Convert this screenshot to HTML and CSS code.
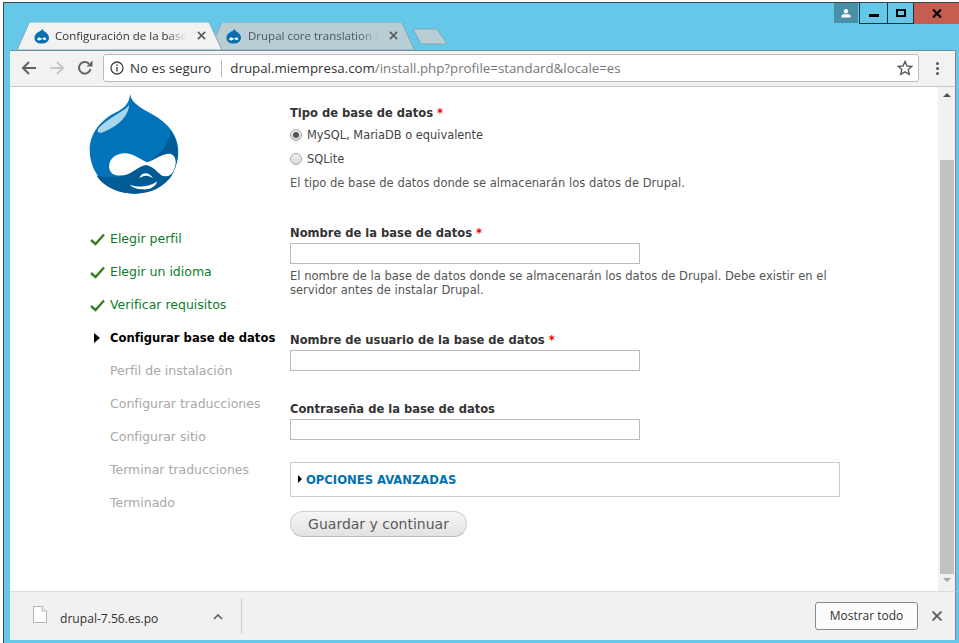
FILE: index.html
```html
<!DOCTYPE html>
<html lang="es">
<head>
    <meta charset="UTF-8">
    <title>Configuración de la base de datos</title>
    <link rel="stylesheet" href="styles.css">
</head>
<body>
    <div class="window">

        <div class="titlebar">
            <div class="tabs">
                <div class="tab tab-active">
                    <svg class="tab-shape" viewBox="0 0 205 28"><path d="M0 28 L12 1 Q12.5 0 14 0 L191 0 Q192 0 192.500 1 L205 28 Z" fill="#f2f2f2" stroke="#7fa9b8"/></svg>
                    <svg class="favicon" viewBox="0 0 16 16"><path d="M9 0 C9 2 11 3 12.500 4 C14.500 5.500 16 7.500 16 10 C16 13.500 12.500 16 8 16 C3.500 16 0.500 13.500 0.500 10 C0.500 7 2.500 5 5 3.500 C7 2.500 8.500 2 9 0 Z" fill="#0b6eb0"/><path d="M3.500 11.500 C3.500 9.500 5.500 9 7 10 L8.500 10.800 C10 9.800 12.500 8.800 13 10.500 C13.200 12 11.500 13 10.500 12 C9.500 11 8.500 11 7.500 12 C6 13 3.500 13 3.500 11.500 Z" fill="#fff"/></svg>
                    <span class="tab-title">Configuración de la base</span>
                    <svg class="tab-close" viewBox="0 0 10 10"><path d="M1 1 L9 9 M9 1 L1 9" stroke="#5a5a5a" stroke-width="1.800"/></svg>
                </div>
                <div class="tab tab-back">
                    <svg class="tab-shape" viewBox="0 0 205 28"><path d="M0 28 L12 1 Q12.500 0 14 0 L191 0 Q192 0 192.500 1 L205 28 Z" fill="#b9cdd4" stroke="#7fa9b8"/></svg>
                    <svg class="favicon" viewBox="0 0 16 16"><path d="M9 0 C9 2 11 3 12.500 4 C14.500 5.500 16 7.500 16 10 C16 13.500 12.500 16 8 16 C3.500 16 0.500 13.500 0.500 10 C0.500 7 2.500 5 5 3.500 C7 2.500 8.500 2 9 0 Z" fill="#0b6eb0"/><path d="M3.500 11.500 C3.500 9.500 5.500 9 7 10 L8.500 10.800 C10 9.800 12.500 8.800 13 10.500 C13.200 12 11.500 13 10.500 12 C9.500 11 8.500 11 7.500 12 C6 13 3.500 13 3.500 11.500 Z" fill="#fff"/></svg>
                    <span class="tab-title">Drupal core translation d</span>
                    <svg class="tab-close" viewBox="0 0 10 10"><path d="M1 1 L9 9 M9 1 L1 9" stroke="#5a5a5a" stroke-width="1.800"/></svg>
                </div>
                <svg class="new-tab" viewBox="0 0 35 17"><path d="M1 1 L23 1 Q24 1 24.500 2 L33.500 15 Q34 16 33 16 L9 16 Q8 16 7.500 15 L0.500 2 Q0 1 1 1 Z" fill="#b9cdd4" stroke="#7fa9b8"/></svg>
            </div>
            <div class="win-controls">
                <div class="win-user">
                    <svg viewBox="0 0 10 9" width="10" height="9"><circle cx="5" cy="2.200" r="2.200" fill="#fff"/><path d="M0.500 8.500 L0.500 6.800 Q0.500 5.500 3 5.300 L7 5.300 Q9.500 5.500 9.500 6.800 L9.500 8.500 Z" fill="#fff"/></svg>
                </div>
                <div class="win-btn win-min"><span></span></div>
                <div class="win-btn win-max"><span></span></div>
                <div class="win-btn win-close">
                    <svg viewBox="0 0 10 9" width="10" height="9"><path d="M1 0.500 L9 8.500 M9 0.500 L1 8.500" stroke="#000" stroke-width="2.200"/></svg>
                </div>
            </div>
        </div>

        <div class="toolbar">
            <svg class="tool-icon" viewBox="0 0 16 16"><path d="M15 8 L2.500 8 M8 2 L2 8 L8 14" fill="none" stroke="#5f6368" stroke-width="2"/></svg>
            <svg class="tool-icon" viewBox="0 0 16 16"><path d="M1 8 L13.500 8 M8 2 L14 8 L8 14" fill="none" stroke="#c8c8c8" stroke-width="2"/></svg>
            <svg class="tool-icon" viewBox="0 0 16 16"><path d="M13.500 9 A5.800 5.800 0 1 1 12 3.800" fill="none" stroke="#5f6368" stroke-width="2"/><path d="M9.500 6.500 L15.500 6.500 L15.500 0.500 Z" fill="#5f6368"/></svg>
            <div class="omnibox">
                <svg class="info-icon" viewBox="0 0 14 14"><circle cx="7" cy="7" r="6" fill="none" stroke="#444" stroke-width="1.300"/><rect x="6.300" y="6" width="1.400" height="4.500" fill="#444"/><rect x="6.300" y="3.500" width="1.400" height="1.500" fill="#444"/></svg>
                <span class="secure-text">No es seguro</span>
                <span class="omni-sep"></span>
                <span class="url"><span class="url-host">drupal.miempresa.com</span>/install.php?profile=standard&amp;locale=es</span>
                <svg class="star" viewBox="0 0 16 16"><path d="M8 1.500 L10 6 L14.800 6.400 L11.200 9.600 L12.300 14.400 L8 11.900 L3.700 14.400 L4.800 9.600 L1.200 6.400 L6 6 Z" fill="none" stroke="#5a5a5a" stroke-width="1.400"/></svg>
            </div>
            <div class="menu-dots"><span></span><span></span><span></span></div>
        </div>

        <div class="main">
            <div class="page">
                <div class="sidebar">
                    <svg class="logo" viewBox="55 15 275 305">
                        <path d="M181 18 C184 40 200 52 235 72 C285 98 325 135 325 190 C325 262 265 316 192 316 C120 316 60 262 60 185 C60 135 95 95 135 75 C160 62 178 50 181 18 Z" fill="#0073ba"/>
                        <path d="M303 128 C330 170 330 230 300 270 C265 310 225 316 192 316 C150 316 105 300 80 262 C110 270 150 268 175 258 C195 245 210 232 230 222 C265 205 295 175 303 128 Z" fill="#005a94"/>
                        <path d="M178 50 C165 70 115 88 85 122 C80 135 90 137 105 130 C140 115 175 90 178 50 Z" fill="#a9d5ef"/>
                        <path d="M118 235 C118 210 140 195 165 195 C190 195 215 215 232 222 C255 215 280 195 300 197 C318 200 322 225 312 245 C305 262 290 268 275 262 C262 250 245 232 228 230 C205 232 185 262 150 262 C130 262 118 252 118 235 Z" fill="#fff"/>
                        <path d="M208 270 C215 252 235 248 250 270 C235 260 222 260 208 270 Z" fill="#fff"/>
                        <path d="M180 289 C205 298 235 298 262 280 C255 300 235 305 215 303 C200 302 188 298 180 289 Z" fill="#fff"/>
                    </svg>
                    <ol class="steps">
                        <li class="step done"><svg class="step-icon" viewBox="0 0 15 13"><path d="M1 7 L5.500 11 L14 1.500" fill="none" stroke="#3b7d23" stroke-width="2.400"/></svg>Elegir perfil</li>
                        <li class="step done"><svg class="step-icon" viewBox="0 0 15 13"><path d="M1 7 L5.500 11 L14 1.500" fill="none" stroke="#3b7d23" stroke-width="2.400"/></svg>Elegir un idioma</li>
                        <li class="step done"><svg class="step-icon" viewBox="0 0 15 13"><path d="M1 7 L5.500 11 L14 1.500" fill="none" stroke="#3b7d23" stroke-width="2.400"/></svg>Verificar requisitos</li>
                        <li class="step active"><span class="step-arrow"></span>Configurar base de datos</li>
                        <li class="step">Perfil de instalación</li>
                        <li class="step">Configurar traducciones</li>
                        <li class="step">Configurar sitio</li>
                        <li class="step">Terminar traducciones</li>
                        <li class="step">Terminado</li>
                    </ol>
                </div>

                <div class="form">
                    <div class="form-item has-desc">
                        <div class="label">Tipo de base de datos <span class="req">*</span></div>
                        <div class="radio-row"><span class="radio checked"></span>MySQL, MariaDB o equivalente</div>
                        <div class="radio-row"><span class="radio"></span>SQLite</div>
                        <div class="desc radio-desc">El tipo de base de datos donde se almacenarán los datos de Drupal.</div>
                    </div>
                    <div class="form-item has-desc name-item">
                        <div class="label">Nombre de la base de datos <span class="req">*</span></div>
                        <div class="text-input"></div>
                        <div class="desc">El nombre de la base de datos donde se almacenarán los datos de Drupal. Debe existir en el servidor antes de instalar Drupal.</div>
                    </div>
                    <div class="form-item">
                        <div class="label">Nombre de usuario de la base de datos <span class="req">*</span></div>
                        <div class="text-input"></div>
                    </div>
                    <div class="form-item last">
                        <div class="label">Contraseña de la base de datos</div>
                        <div class="text-input"></div>
                    </div>
                    <div class="fieldset"><span class="fieldset-arrow"></span><span class="fieldset-link">OPCIONES AVANZADAS</span></div>
                    <div class="submit">Guardar y continuar</div>
                </div>
            </div>

            <div class="scrollbar">
                <div class="scroll-up"></div>
                <div class="scroll-thumb"></div>
                <div class="scroll-down"></div>
            </div>
        </div>

        <div class="shelf">
            <svg class="file-icon" viewBox="0 0 14 17"><path d="M0.500 0.500 L9 0.500 L13.500 5 L13.500 16.500 L0.500 16.500 Z" fill="#fff" stroke="#b5b5b5"/><path d="M9 0.500 L9 5 L13.500 5" fill="#eee" stroke="#b5b5b5"/></svg>
            <span class="file-name">drupal-7.56.es.po</span>
            <svg class="chevron" viewBox="0 0 10 6"><path d="M1 5 L5 1 L9 5" fill="none" stroke="#5a5a5a" stroke-width="1.600"/></svg>
            <span class="shelf-sep"></span>
            <div class="show-all">Mostrar todo</div>
            <svg class="shelf-close" viewBox="0 0 10 10"><path d="M0.500 0.500 L9.500 9.500 M9.500 0.500 L0.500 9.500" stroke="#5a5a5a" stroke-width="1.800"/></svg>
        </div>

    </div>
</body>
</html>
```

FILE: styles.css
```css
:root{
    --frame: #65c8e9;
    --frame-dark: #37474f;
    --frame-edge: #6f8f9c;
    --font-page: "DejaVu Sans", Verdana, sans-serif;
    --font-bold: "DejaVu Sans Condensed", "DejaVu Sans", Verdana, sans-serif;
    --font-ui: "Open Sans", "Noto Sans", sans-serif;
}

body{
    margin: 0;
    background-color: white;
    font-family: var(--font-page);
    overflow: hidden;
}

.window{
    box-sizing: border-box;
    display: flex;
    flex-direction: column;
    width: 956px;
    height: 641px;
    margin: 2px 0 0 3px;
    padding: 0 3px 3px 6px;
    border-top: 1px solid var(--frame-dark);
    border-left: 1px solid var(--frame-dark);
    background-color: var(--frame);
}

/* title bar */

.titlebar{
    display: flex;
    justify-content: space-between;
    height: 47px;
    flex-shrink: 0;
}

.tabs{
    display: flex;
    align-items: flex-end;
    padding-left: 7px;
}

.tab{
    position: relative;
    display: flex;
    align-items: center;
    box-sizing: border-box;
    width: 205px;
    height: 28px;
    padding: 0 17px 1px;
    font-family: var(--font-ui);
    font-size: 11.5px;
    color: #333;
}

.tab-active{
    z-index: 2;
}

.tab-active .favicon{
    margin-right: 6px;
}

.tab-active .tab-close{
    margin-left: 11px;
}

.tab-back{
    margin-left: -13px;
    width: 206px;
    color: #455a64;
}

.tab-shape{
    position: absolute;
    left: 0;
    top: 0;
    width: 100%;
    height: 100%;
}

.favicon{
    position: relative;
    width: 15px;
    height: 16px;
    flex-shrink: 0;
    margin-right: 7px;
}

.tab-title{
    position: relative;
    width: 131px;
    white-space: nowrap;
    -webkit-mask-image: linear-gradient(to right, black 85%, transparent);
    mask-image: linear-gradient(to right, black 85%, transparent);
}

.tab-close{
    position: relative;
    width: 9px;
    height: 9px;
    margin-left: 10px;
    flex-shrink: 0;
}

.new-tab{
    width: 35px;
    height: 17px;
    margin: 0 0 5px -2px;
}

.win-controls{
    display: flex;
    align-items: flex-start;
    margin-right: -3px;
}

.win-user{
    display: flex;
    align-items: center;
    justify-content: center;
    width: 24px;
    height: 20px;
    margin-right: 1px;
    background-color: #4a8fa8;
}

.win-btn{
    box-sizing: border-box;
    display: flex;
    align-items: center;
    justify-content: center;
    height: 21px;
    border: 1px solid #14323f;
    border-top: none;
}

.win-min{
    width: 29px;
}

.win-min span{
    width: 10px;
    height: 3px;
    margin-top: 5px;
    background-color: black;
}

.win-max{
    width: 26px;
    border-left: none;
}

.win-max span{
    box-sizing: border-box;
    width: 10px;
    height: 8px;
    border: 2px solid black;
}

.win-close{
    width: 45px;
    border: none;
    background-color: #c75c50;
}

/* toolbar */

.toolbar{
    display: flex;
    align-items: center;
    box-sizing: border-box;
    height: 37px;
    flex-shrink: 0;
    padding: 0 0 1px 11px;
    background-color: #f2f2f2;
    border-top: 1px solid var(--frame-edge);
    border-right: 1px solid var(--frame-edge);
    border-bottom: 1px solid #c8c8c8;
}

.tool-icon{
    width: 16px;
    height: 16px;
    margin-right: 12px;
}

.omnibox{
    display: flex;
    align-items: center;
    box-sizing: border-box;
    width: 816px;
    height: 28px;
    margin-left: -2px;
    padding: 0 5px 0 6px;
    background-color: white;
    border: 1px solid #bbb;
    border-radius: 3px;
    font-family: var(--font-ui);
    font-size: 13.3px;
    color: #777;
}

.info-icon{
    width: 14px;
    height: 14px;
    margin-right: 6px;
}

.secure-text{
    color: #333;
}

.omni-sep{
    width: 1px;
    height: 17px;
    margin: 0 8px 0 10px;
    background-color: #bbb;
}

.url{
    flex: 1;
}

.url-host{
    color: #333;
}

.star{
    width: 16px;
    height: 16px;
}

.menu-dots{
    display: flex;
    flex-direction: column;
    gap: 2px;
    margin-left: 17px;
}

.menu-dots span{
    width: 3px;
    height: 3px;
    border-radius: 50%;
    background-color: #555;
}

/* page */

.main{
    display: flex;
    height: 504px;
    flex-shrink: 0;
    background-color: white;
    border-right: 1px solid var(--frame-edge);
}

.page{
    display: flex;
    flex: 1;
    padding-left: 80px;
}

.sidebar{
    width: 200px;
    flex-shrink: 0;
}

.logo{
    display: block;
    width: 92px;
    height: 102px;
    margin-top: 6px;
    margin-left: -2px;
}

.steps{
    list-style: none;
    margin: 27px 0 0;
    padding: 0;
}

.step{
    position: relative;
    height: 33px;
    padding-left: 20px;
    line-height: 33px;
    font-size: 12.5px;
    color: #a8a8a8;
    white-space: nowrap;
}

.step.done{
    color: #0b7d2a;
}

.step.active{
    color: black;
    font-family: var(--font-bold);
    font-size: 12.9px;
    font-weight: bold;
}

.step-icon{
    position: absolute;
    left: 0;
    top: 11px;
    width: 15px;
    height: 13px;
}

.step-arrow{
    position: absolute;
    left: 4px;
    top: 12px;
    border-left: 6px solid black;
    border-top: 5px solid transparent;
    border-bottom: 5px solid transparent;
}

.form{
    width: 550px;
    padding-top: 18px;
}

.form-item{
    margin-bottom: 30px;
}

.form-item.has-desc{
    margin-bottom: 34px;
}

.form-item.name-item{
    margin-bottom: 35px;
}

.form-item.last{
    margin-bottom: 22px;
}

.label{
    height: 16px;
    line-height: 16px;
    font-family: var(--font-bold);
    font-size: 12.8px;
    font-weight: bold;
    color: #333;
}

.req{
    color: #e00;
}

.radio-row{
    display: flex;
    align-items: center;
    height: 24px;
    margin-top: 2px;
    font-size: 11.4px;
    color: #444;
}

.radio-row + .radio-row{
    margin-top: 0;
}

.radio{
    box-sizing: border-box;
    display: flex;
    align-items: center;
    justify-content: center;
    width: 12px;
    height: 12px;
    margin-right: 5px;
    border: 1px solid #aaa;
    border-radius: 50%;
    background: linear-gradient(#f0f0f0, #d8d8d8);
}

.radio.checked::after{
    content: "";
    width: 6px;
    height: 6px;
    border-radius: 50%;
    background-color: #555;
}

.desc{
    margin-top: 5px;
    line-height: 14px;
    font-size: 11.55px;
    color: #555;
}

.radio-desc{
    margin-top: 4px;
    line-height: 16px;
}

.text-input{
    box-sizing: border-box;
    width: 350px;
    height: 21px;
    margin-top: 2px;
    border: 1px solid #bbb;
    background-color: white;
}

.fieldset{
    display: flex;
    align-items: center;
    box-sizing: border-box;
    height: 35px;
    padding: 0 0 1px 7px;
    border: 1px solid #ccc;
}

.fieldset-arrow{
    margin-right: 4px;
    border-left: 4px solid black;
    border-top: 4px solid transparent;
    border-bottom: 4px solid transparent;
}

.fieldset-link{
    font-family: var(--font-bold);
    font-size: 12.9px;
    font-weight: bold;
    color: #0071b3;
}

.submit{
    box-sizing: border-box;
    width: 177px;
    height: 26px;
    margin-top: 14px;
    line-height: 24px;
    text-align: center;
    font-size: 14px;
    color: #5a5a5a;
    border: 1px solid #d0d0d0;
    border-bottom-color: #bbb;
    border-radius: 13px;
    background: linear-gradient(#f6f6f6, #e2e2e2);
}

.scrollbar{
    display: flex;
    flex-direction: column;
    align-items: center;
    box-sizing: border-box;
    width: 17px;
    height: 100%;
    padding: 0 1px 0 2px;
    background-color: #f1f1f1;
}

.scroll-up{
    height: 0;
    margin: 6px 0 0;
    border-left: 4px solid transparent;
    border-right: 4px solid transparent;
    border-bottom: 4px solid #505050;
}

.scroll-thumb{
    width: 14px;
    height: 414px;
    margin-top: 63px;
    background-color: #c1c1c1;
}

.scroll-down{
    height: 0;
    margin-top: 4px;
    border-left: 4px solid transparent;
    border-right: 4px solid transparent;
    border-top: 4px solid #a3a3a3;
}

/* downloads shelf */

.shelf{
    display: flex;
    align-items: center;
    box-sizing: border-box;
    height: 49px;
    padding-left: 23px;
    border-top: 1px solid #ddd;
    border-right: 1px solid var(--frame-edge);
    background-color: #f1f1f1;
    font-family: var(--font-ui);
}

.file-icon{
    width: 14px;
    height: 17px;
    margin: -4px 13px 0 0;
}

.file-name{
    width: 153px;
    font-size: 12.1px;
    color: #333;
    margin-top: 4px;
}

.chevron{
    width: 10px;
    height: 6px;
    margin-top: 2px;
}

.shelf-sep{
    width: 1px;
    height: 36px;
    margin-left: 18px;
    background-color: #ccc;
}

.show-all{
    box-sizing: border-box;
    width: 103px;
    height: 28px;
    margin-left: auto;
    line-height: 26px;
    text-align: center;
    font-size: 12px;
    color: #333;
    background-color: #fcfcfc;
    border: 1px solid #8a8a8a;
    border-radius: 3px;
}

.shelf-close{
    width: 10px;
    height: 10px;
    margin: 0 13px 0 14px;
}
```
